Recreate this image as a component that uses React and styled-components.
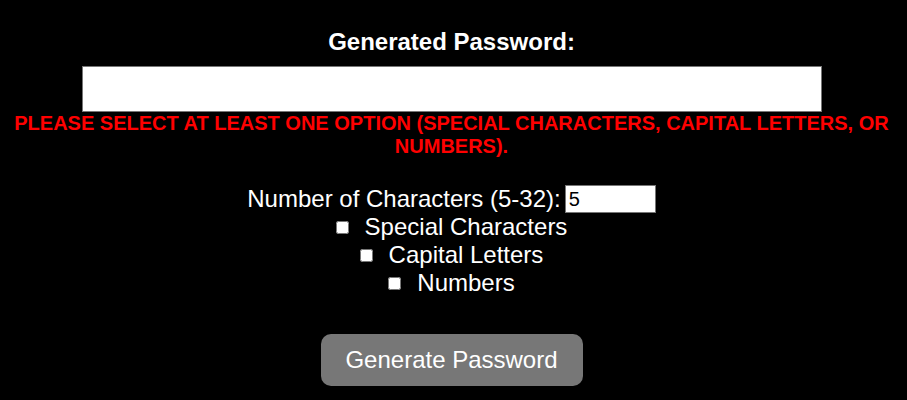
import React from 'react'
import { styled, createGlobalStyle } from 'styled-components'

const Global = createGlobalStyle`
  html, body {
    margin: 0;
    background: #000;
  }
  body {
    font-family: "Liberation Sans", Arial, sans-serif;
    color: #fff;
  }
`

const Page = styled.div`
  display: flex;
  flex-direction: column;
  align-items: center;
  padding: 28px 12px 0 8px;
  text-align: center;
`

const Title = styled.h2`
  margin: 0;
  font-size: 24px;
  font-weight: bold;
  line-height: 28px;
`

const Output = styled.input`
  box-sizing: border-box;
  width: 740px;
  height: 46px;
  margin-top: 10px;
  border: 1px solid #767676;
  background: #fff;
  font-size: 20px;
`

const Error = styled.p`
  margin: 0;
  color: #ff0000;
  font-size: 20px;
  font-weight: bold;
  line-height: 23px;
  text-transform: uppercase;
`

const Options = styled.div`
  display: flex;
  flex-direction: column;
  align-items: center;
  margin-top: 27px;
  font-size: 24px;
  line-height: 28px;
`

const LengthRow = styled.label`
  display: flex;
  align-items: center;
  gap: 4px;
`

const LengthInput = styled.input`
  box-sizing: border-box;
  width: 91px;
  height: 28px;
  border: 1px solid #767676;
  font-family: "Liberation Sans", Arial, sans-serif;
  font-size: 20px;
  padding: 0 3px;
`

const CheckRow = styled.label`
  display: flex;
  align-items: center;
  gap: 16px;
`

const Box = styled.input`
  width: 13px;
  height: 13px;
  margin: 0;
`

const Button = styled.button`
  margin-top: 37px;
  width: 262px;
  height: 52px;
  border: none;
  border-radius: 10px;
  background: #777;
  color: #fff;
  font-family: "Liberation Sans", Arial, sans-serif;
  font-size: 24px;
  cursor: pointer;
`

const options = ['Special Characters', 'Capital Letters', 'Numbers']

const App = () => {
  return (
    <Page>
      <Global />
      <Title>Generated Password:</Title>
      <Output type="text" readOnly />
      <Error>
        Please select at least one option (special characters, capital letters, or numbers).
      </Error>
      <Options>
        <LengthRow>
          Number of Characters (5-32):
          <LengthInput type="number" defaultValue={5} min={5} max={32} />
        </LengthRow>
        {options.map((item) => (
          <CheckRow key={item}>
            <Box type="checkbox" />
            {item}
          </CheckRow>
        ))}
      </Options>
      <Button>Generate Password</Button>
    </Page>
  )
}

export default App
